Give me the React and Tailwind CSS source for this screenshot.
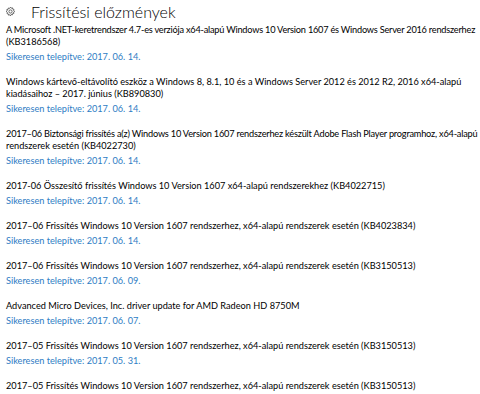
const UPDATES = [
  {
    lines: [
      'A Microsoft .NET-keretrendszer 4.7-es verziója x64-alapú Windows 10 Version 1607 és Windows Server 2016 rendszerhez',
      '(KB3186568)',
    ],
    date: '2017. 06. 14.',
  },
  {
    lines: [
      'Windows kártevő-eltávolító eszköz a Windows 8, 8.1, 10 és a Windows Server 2012 és 2012 R2, 2016 x64-alapú',
      'kiadásaihoz – 2017. június (KB890830)',
    ],
    date: '2017. 06. 14.',
  },
  {
    lines: [
      '2017–06 Biztonsági frissítés a(z) Windows 10 Version 1607 rendszerhez készült Adobe Flash Player programhoz, x64-alapú',
      'rendszerek esetén (KB4022730)',
    ],
    date: '2017. 06. 14.',
  },
  {
    lines: ['2017-06 Összesítő frissítés Windows 10 Version 1607 x64-alapú rendszerekhez (KB4022715)'],
    date: '2017. 06. 14.',
  },
  {
    lines: ['2017–06 Frissítés Windows 10 Version 1607 rendszerhez, x64-alapú rendszerek esetén (KB4023834)'],
    date: '2017. 06. 14.',
  },
  {
    lines: ['2017–06 Frissítés Windows 10 Version 1607 rendszerhez, x64-alapú rendszerek esetén (KB3150513)'],
    date: '2017. 06. 09.',
  },
  {
    lines: ['Advanced Micro Devices, Inc. driver update for AMD Radeon HD 8750M'],
    date: '2017. 06. 07.',
  },
  {
    lines: ['2017–05 Frissítés Windows 10 Version 1607 rendszerhez, x64-alapú rendszerek esetén (KB3150513)'],
    date: '2017. 05. 31.',
  },
  {
    lines: ['2017–05 Frissítés Windows 10 Version 1607 rendszerhez, x64-alapú rendszerek esetén (KB3150513)'],
    date: '',
  },
];

// first lines of the two longest entries need a touch of negative tracking to fit
const TIGHT = { '0-0': 'tracking-[-0.22px]', '2-0': 'tracking-[-0.2px]' };

function Gear() {
  return (
    <svg width="11" height="11" viewBox="0 0 24 24" fill="none" stroke="#444" strokeWidth="1.7">
      <path d="M12 2.5l1.6 2.3 2.7-.8.5 2.8 2.8.5-.8 2.7 2.3 1.6-2.3 1.6.8 2.7-2.8.5-.5 2.8-2.7-.8L12 21.5l-1.6-2.3-2.7.8-.5-2.8-2.8-.5.8-2.7L2.5 12l2.3-1.6-.8-2.7 2.8-.5.5-2.8 2.7.8z" strokeLinejoin="round" />
      <circle cx="12" cy="12" r="3.5" />
    </svg>
  );
}

export default function App() {
  return (
    <div className="w-[480px] h-[394px] overflow-hidden bg-white text-black"
         style={{ fontFamily: 'Lato, "Open Sans", sans-serif' }}>
      <div className="flex items-center gap-[15px] pl-[5px] pt-[1px] h-[22px]">
        <Gear />
        <h1 className="text-[16px] font-light leading-none">Frissítési előzmények</h1>
      </div>
      <div className="flex flex-col gap-[13px] pl-[6px] pt-[2px]">
        {UPDATES.map((u, i) => (
          <div key={i} className="flex flex-col gap-[3px]">
            <div className="text-[9.2px] leading-[12px] whitespace-nowrap">
              {u.lines.map((l, j) => (
                <p key={j} className={TIGHT[`${i}-${j}`] || ''}>{l}</p>
              ))}
            </div>
            {u.date && (
              <p className="text-[9.2px] leading-[12px] text-[#2e7dc4]">Sikeresen telepítve: {u.date}</p>
            )}
          </div>
        ))}
      </div>
    </div>
  );
}
